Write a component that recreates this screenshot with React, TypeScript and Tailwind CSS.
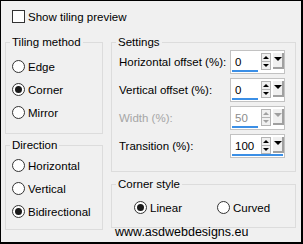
import React from "react";

const font = { fontFamily: '"Liberation Sans", Arial, sans-serif' };

function Radio({ label, checked }: { label: string; checked?: boolean }) {
  return (
    <div className="flex h-[23px] items-center">
      <div className="flex h-[13px] w-[13px] items-center justify-center rounded-full border border-[#333333] bg-white">
        {checked && <div className="h-[7px] w-[7px] rounded-full bg-[#1a1a1a]" />}
      </div>
      <span className="ml-[3px] leading-[16px]">{label}</span>
    </div>
  );
}

function Group({
  title,
  className,
  children,
}: {
  title: string;
  className: string;
  children: React.ReactNode;
}) {
  return (
    <div className={"flex flex-col border border-[#dcdcdc] " + className}>
      <span className="-mt-[9px] ml-[4px] block w-fit bg-[#f0f0f0] px-[2px] leading-[16px]">
        {title}
      </span>
      {children}
    </div>
  );
}

function Arrow({ up, color, size }: { up?: boolean; color: string; size: number }) {
  return (
    <svg width={size} height={Math.ceil(size / 2)} viewBox="0 0 10 5">
      <path d={up ? "M0 5 L5 0 L10 5 Z" : "M0 0 L10 0 L5 5 Z"} fill={color} />
    </svg>
  );
}

function Spin({ value, disabled, full }: { value: string; disabled?: boolean; full?: boolean }) {
  const c = disabled ? "#a0a0a0" : "#000000";
  return (
    <div className="flex h-[24px] w-[55px] flex-col border border-[#c2c2c2] bg-white">
      <div className="flex flex-1">
        <div className={"w-[28px] pl-[4px] pt-[3px] leading-[16px] " + (disabled ? "text-[#8c8c8c]" : "text-[#000000]")}>
          {value}
        </div>
        <div className="ml-[2px] mt-[2px] flex w-[10px] flex-col">
          <div className="flex h-[9px] items-center justify-center border border-[#b4b4b4] bg-[#f0f0f0]">
            <Arrow up color={c} size={6} />
          </div>
          <div className="-mt-px flex h-[9px] items-center justify-center border border-[#b4b4b4] bg-[#f0f0f0]">
            <Arrow color={c} size={6} />
          </div>
        </div>
        <div className="ml-[2px] mt-[2px] mb-[1px] flex w-[11px] items-start justify-center border-r-2 border-b-2 border-[#a0a0a0] bg-[#f0f0f0] pt-[4px]">
          <Arrow color={c} size={8} />
        </div>
      </div>
      <div className={"mb-[1px] ml-[1px] h-[3px] bg-[#3b8fe6] " + (full ? "mr-[1px]" : "w-[26px]")} />
    </div>
  );
}

function SpinRow({
  label,
  value,
  disabled,
  full,
}: {
  label: string;
  value: string;
  disabled?: boolean;
  full?: boolean;
}) {
  return (
    <div className="flex h-[28px] items-center justify-between pl-[7px] pr-[10px]">
      <span className={"leading-[16px] " + (disabled ? "text-[#a6a6a6]" : "")}>{label}</span>
      <Spin value={value} disabled={disabled} full={full} />
    </div>
  );
}

export default function App() {
  return (
    <div
      className="h-[244px] w-[303px] overflow-hidden border-t border-l border-r-2 border-b-2 border-black bg-[#f0f0f0] text-[11.5px] text-black"
      style={font}
    >
      <div className="ml-[11px] mt-[9px] flex h-[13px] items-center">
        <div className="h-[13px] w-[13px] border border-[#333333] bg-white" />
        <span className="ml-[3px] leading-[16px]">Show tiling preview</span>
      </div>

      <div className="ml-[4px] mt-[19px] flex gap-[8px]">
        <div className="flex w-[98px] flex-col">
          <Group title="Tiling method" className="h-[92px]">
            <div className="mt-[5px] pl-[6px]">
              <Radio label="Edge" />
              <Radio label="Corner" checked />
              <Radio label="Mirror" />
            </div>
          </Group>
          <Group title="Direction" className="mt-[11px] h-[85px]">
            <div className="mt-[1px] pl-[6px]">
              <Radio label="Horizontal" />
              <Radio label="Vertical" />
              <Radio label="Bidirectional" checked />
            </div>
          </Group>
        </div>

        <div className="flex w-[185px] flex-col">
          <Group title="Settings" className="h-[130px]">
            <div className="-mt-[2px]">
              <SpinRow label="Horizontal offset (%):" value="0" />
              <SpinRow label="Vertical offset (%):" value="0" />
              <SpinRow label="Width (%):" value="50" disabled />
              <SpinRow label="Transition (%):" value="100" full />
            </div>
          </Group>
          <Group title="Corner style" className="mt-[12px] h-[44px]">
            <div className="mt-[4px] flex pl-[22px]">
              <div className="w-[83px]">
                <Radio label="Linear" checked />
              </div>
              <Radio label="Curved" />
            </div>
          </Group>
          <div className="-mt-[3px] ml-[4px] text-[12.5px] leading-[15px]">www.asdwebdesigns.eu</div>
        </div>
      </div>
    </div>
  );
}
